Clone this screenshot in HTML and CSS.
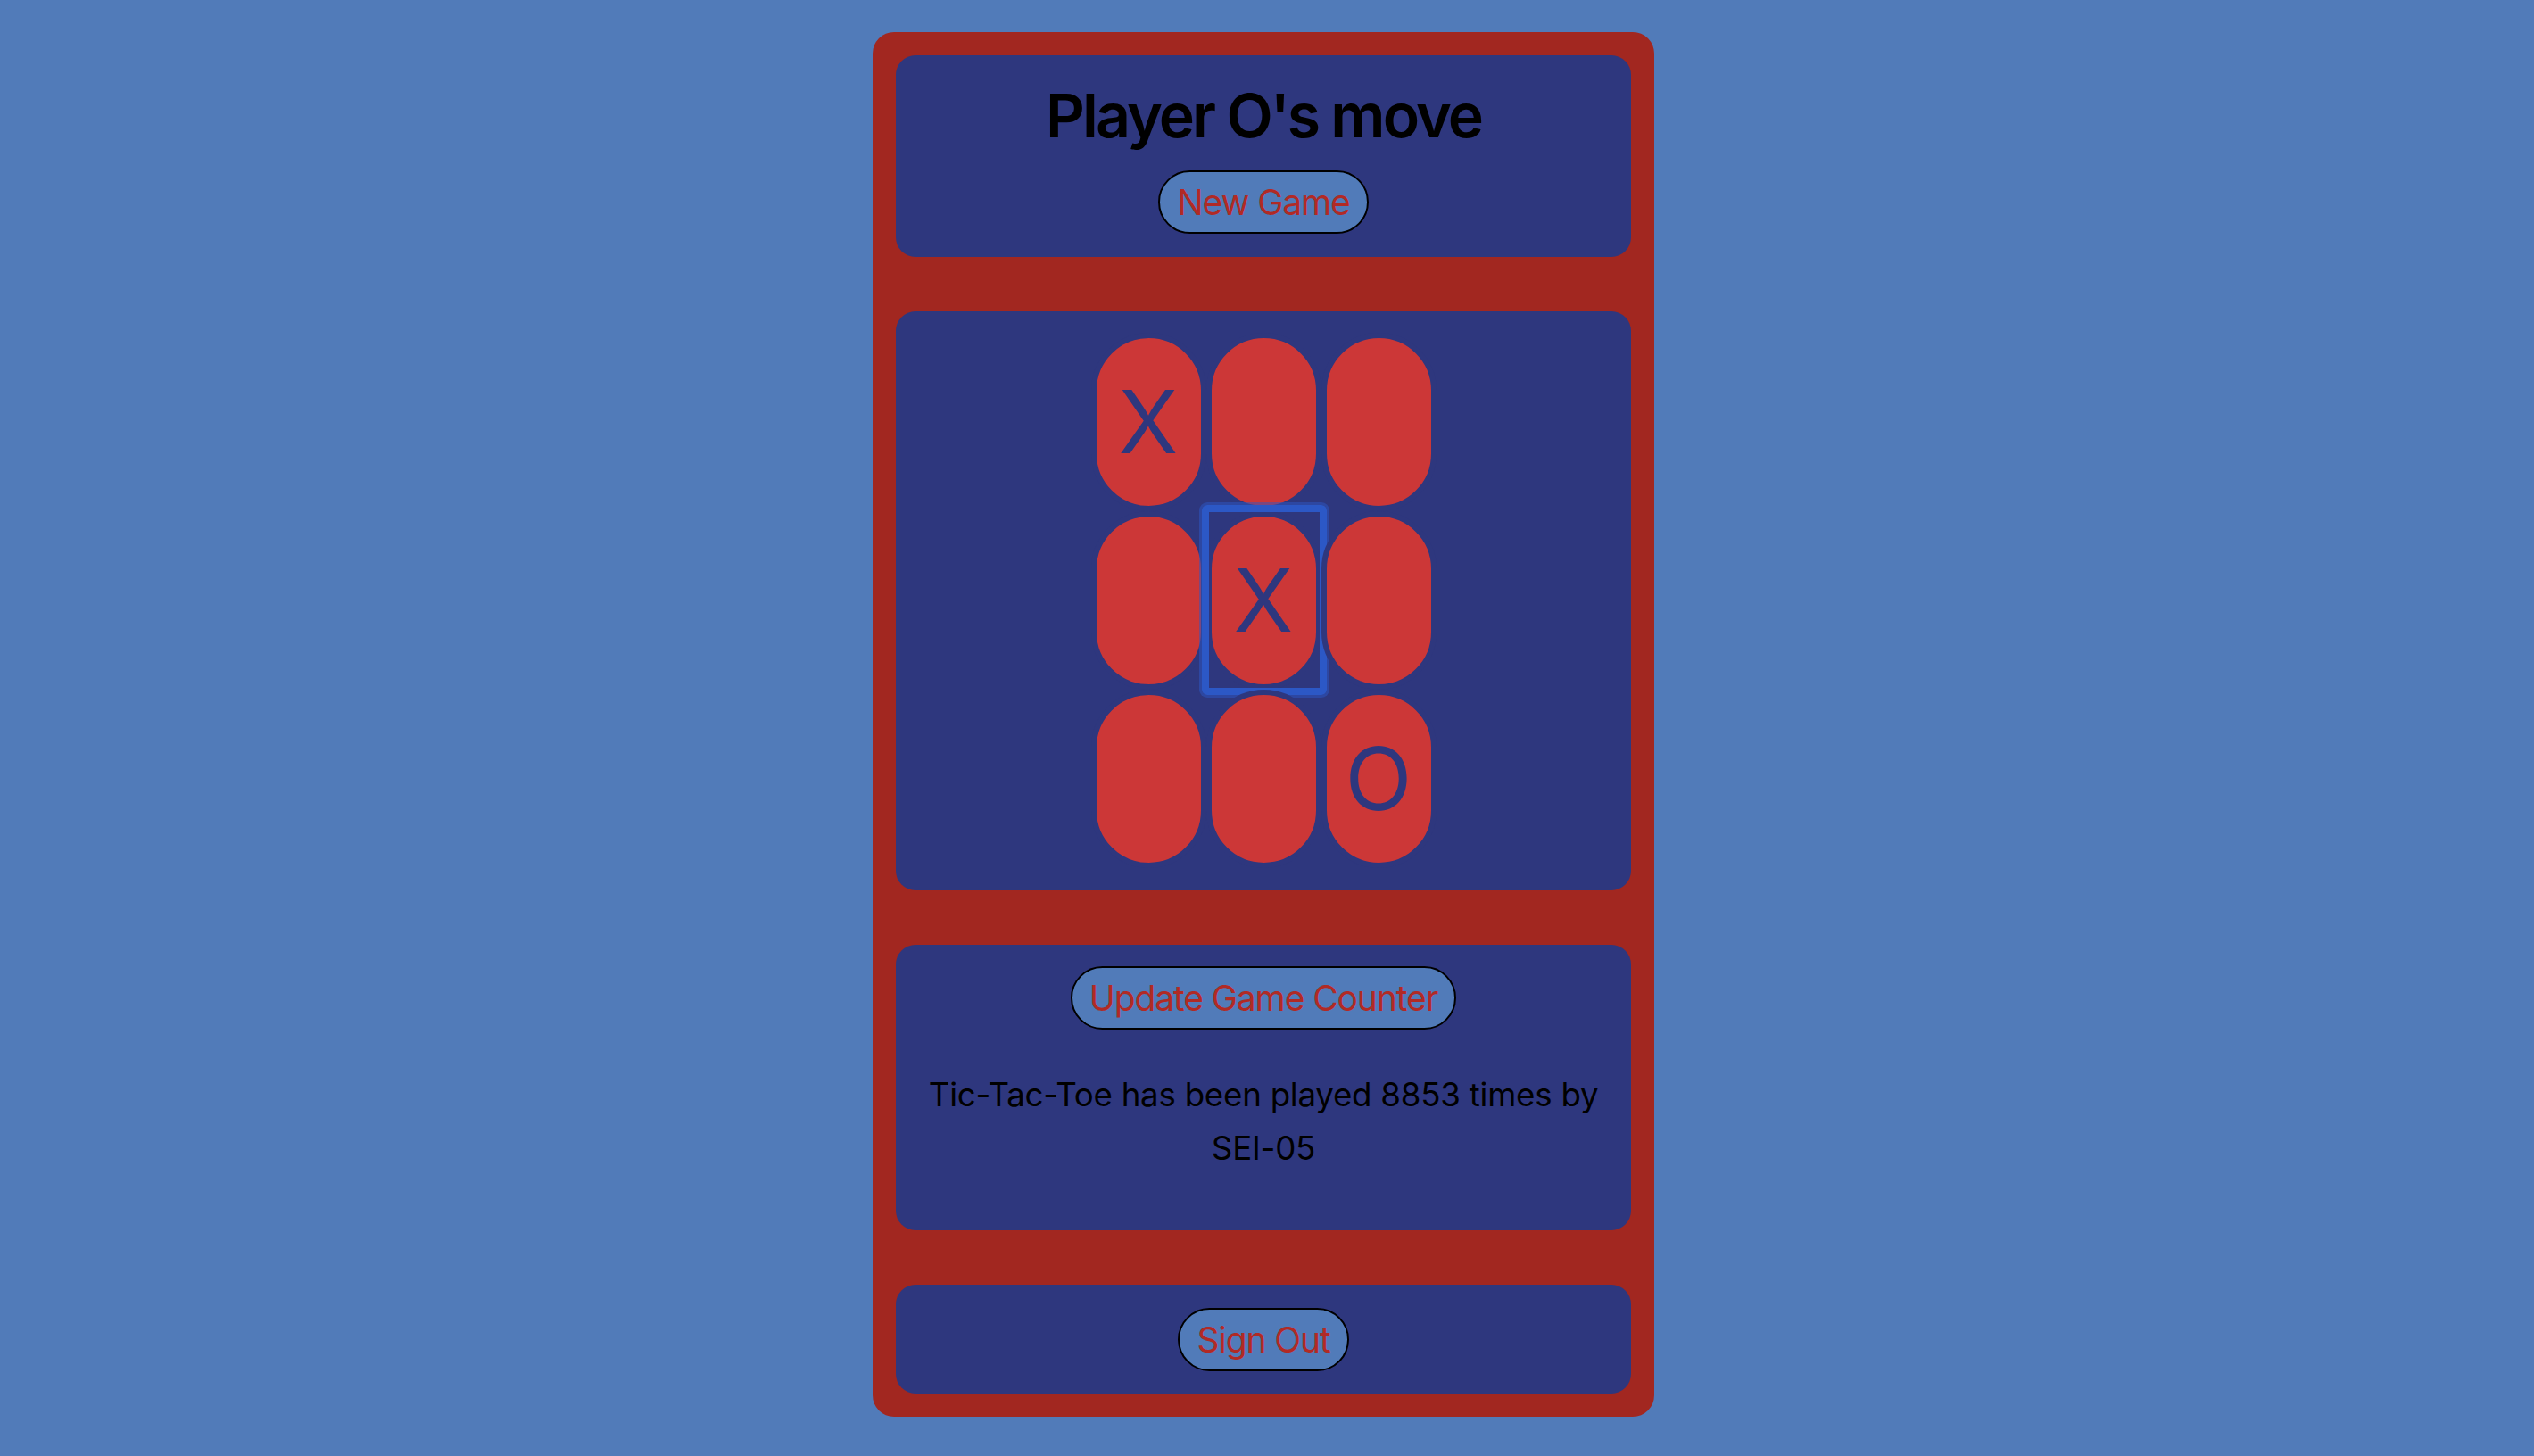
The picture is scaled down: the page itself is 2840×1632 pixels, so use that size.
FILE: index.html
```html
<!DOCTYPE html>
<html lang="en">
<head>
<meta charset="utf-8">
<title>Tic-Tac-Toe</title>
<link rel="stylesheet" href="styles.css">
</head>
<body>
<main class="app">
  <section class="panel panel-status">
    <h1 class="status">Player O's move</h1>
    <button class="pill-btn" type="button">New Game</button>
  </section>
  <section class="panel panel-board">
    <div class="board">
      <button class="cell" type="button">X</button>
      <button class="cell" type="button"></button>
      <button class="cell" type="button"></button>
      <button class="cell" type="button"></button>
      <button class="cell is-focused" type="button">X</button>
      <button class="cell" type="button"></button>
      <button class="cell" type="button"></button>
      <button class="cell" type="button"></button>
      <button class="cell" type="button">O</button>
    </div>
  </section>
  <section class="panel panel-counter">
    <button class="pill-btn" type="button">Update Game Counter</button>
    <p class="counter-text">Tic-Tac-Toe has been played 8853 times by SEI-05</p>
  </section>
  <section class="panel panel-signout">
    <button class="pill-btn" type="button">Sign Out</button>
  </section>
</main>
</body>
</html>
```
FILE: styles.css
```css
html, body {
  margin: 0;
  padding: 0;
}
body {
  background: #517bb9;
  padding: 36px 8px 44px 0;
  font-family: Inter, "Noto Sans", "Liberation Sans", sans-serif;
  color: #000;
}
.app {
  width: 824px;
  margin: 0 auto;
  background: #a22720;
  border-radius: 24px;
  padding: 26px;
  display: flex;
  flex-direction: column;
  gap: 61px;
}
.panel {
  background: #2e377e;
  border-radius: 22px;
  display: flex;
  flex-direction: column;
  align-items: center;
}
.panel-status {
  padding: 27px 24px 26px;
}
.status {
  margin: 0 0 22px;
  font-size: 68px;
  line-height: 80px;
  font-weight: 600;
  letter-spacing: -2.9px;
}
.pill-btn {
  height: 71px;
  padding: 0 19px;
  border: 2px solid #000;
  border-radius: 40px;
  background: #517bb9;
  color: #b12a25;
  font-family: Inter, "Noto Sans", "Liberation Sans", sans-serif;
  font-size: 39px;
  letter-spacing: -1.1px;
  line-height: 1;
  cursor: pointer;
}
.panel-board {
  padding: 24px 24px 25px;
}
.board {
  display: grid;
  grid-template-columns: repeat(3, 129px);
  grid-template-rows: repeat(3, 200px);
}
.cell {
  position: relative;
  box-sizing: border-box;
  width: 129px;
  height: 200px;
  padding: 0;
  border: 6px solid #2e377e;
  border-radius: 9999px;
  background: #cc3737;
  color: #2e377e;
  font-family: Inter, "Noto Sans", "Liberation Sans", sans-serif;
  font-size: 98px;
  font-weight: 400;
  line-height: 1;
  display: flex;
  align-items: center;
  justify-content: center;
}
.cell.is-focused::after {
  content: "";
  position: absolute;
  top: -13px;
  left: -11px;
  right: -12px;
  bottom: -12px;
  border: 8px solid #2c58c6;
  border-radius: 6px;
  box-shadow: 0 0 0 3px rgba(44, 88, 198, 0.5);
  pointer-events: none;
}
.panel-counter {
  padding: 24px 24px 24px;
}
.counter-text {
  margin: 43px 0 38px;
  font-size: 36.7px;
  line-height: 60px;
  letter-spacing: -0.25px;
  text-align: center;
}
.panel-signout {
  padding: 26px 24px 25px;
}
```
